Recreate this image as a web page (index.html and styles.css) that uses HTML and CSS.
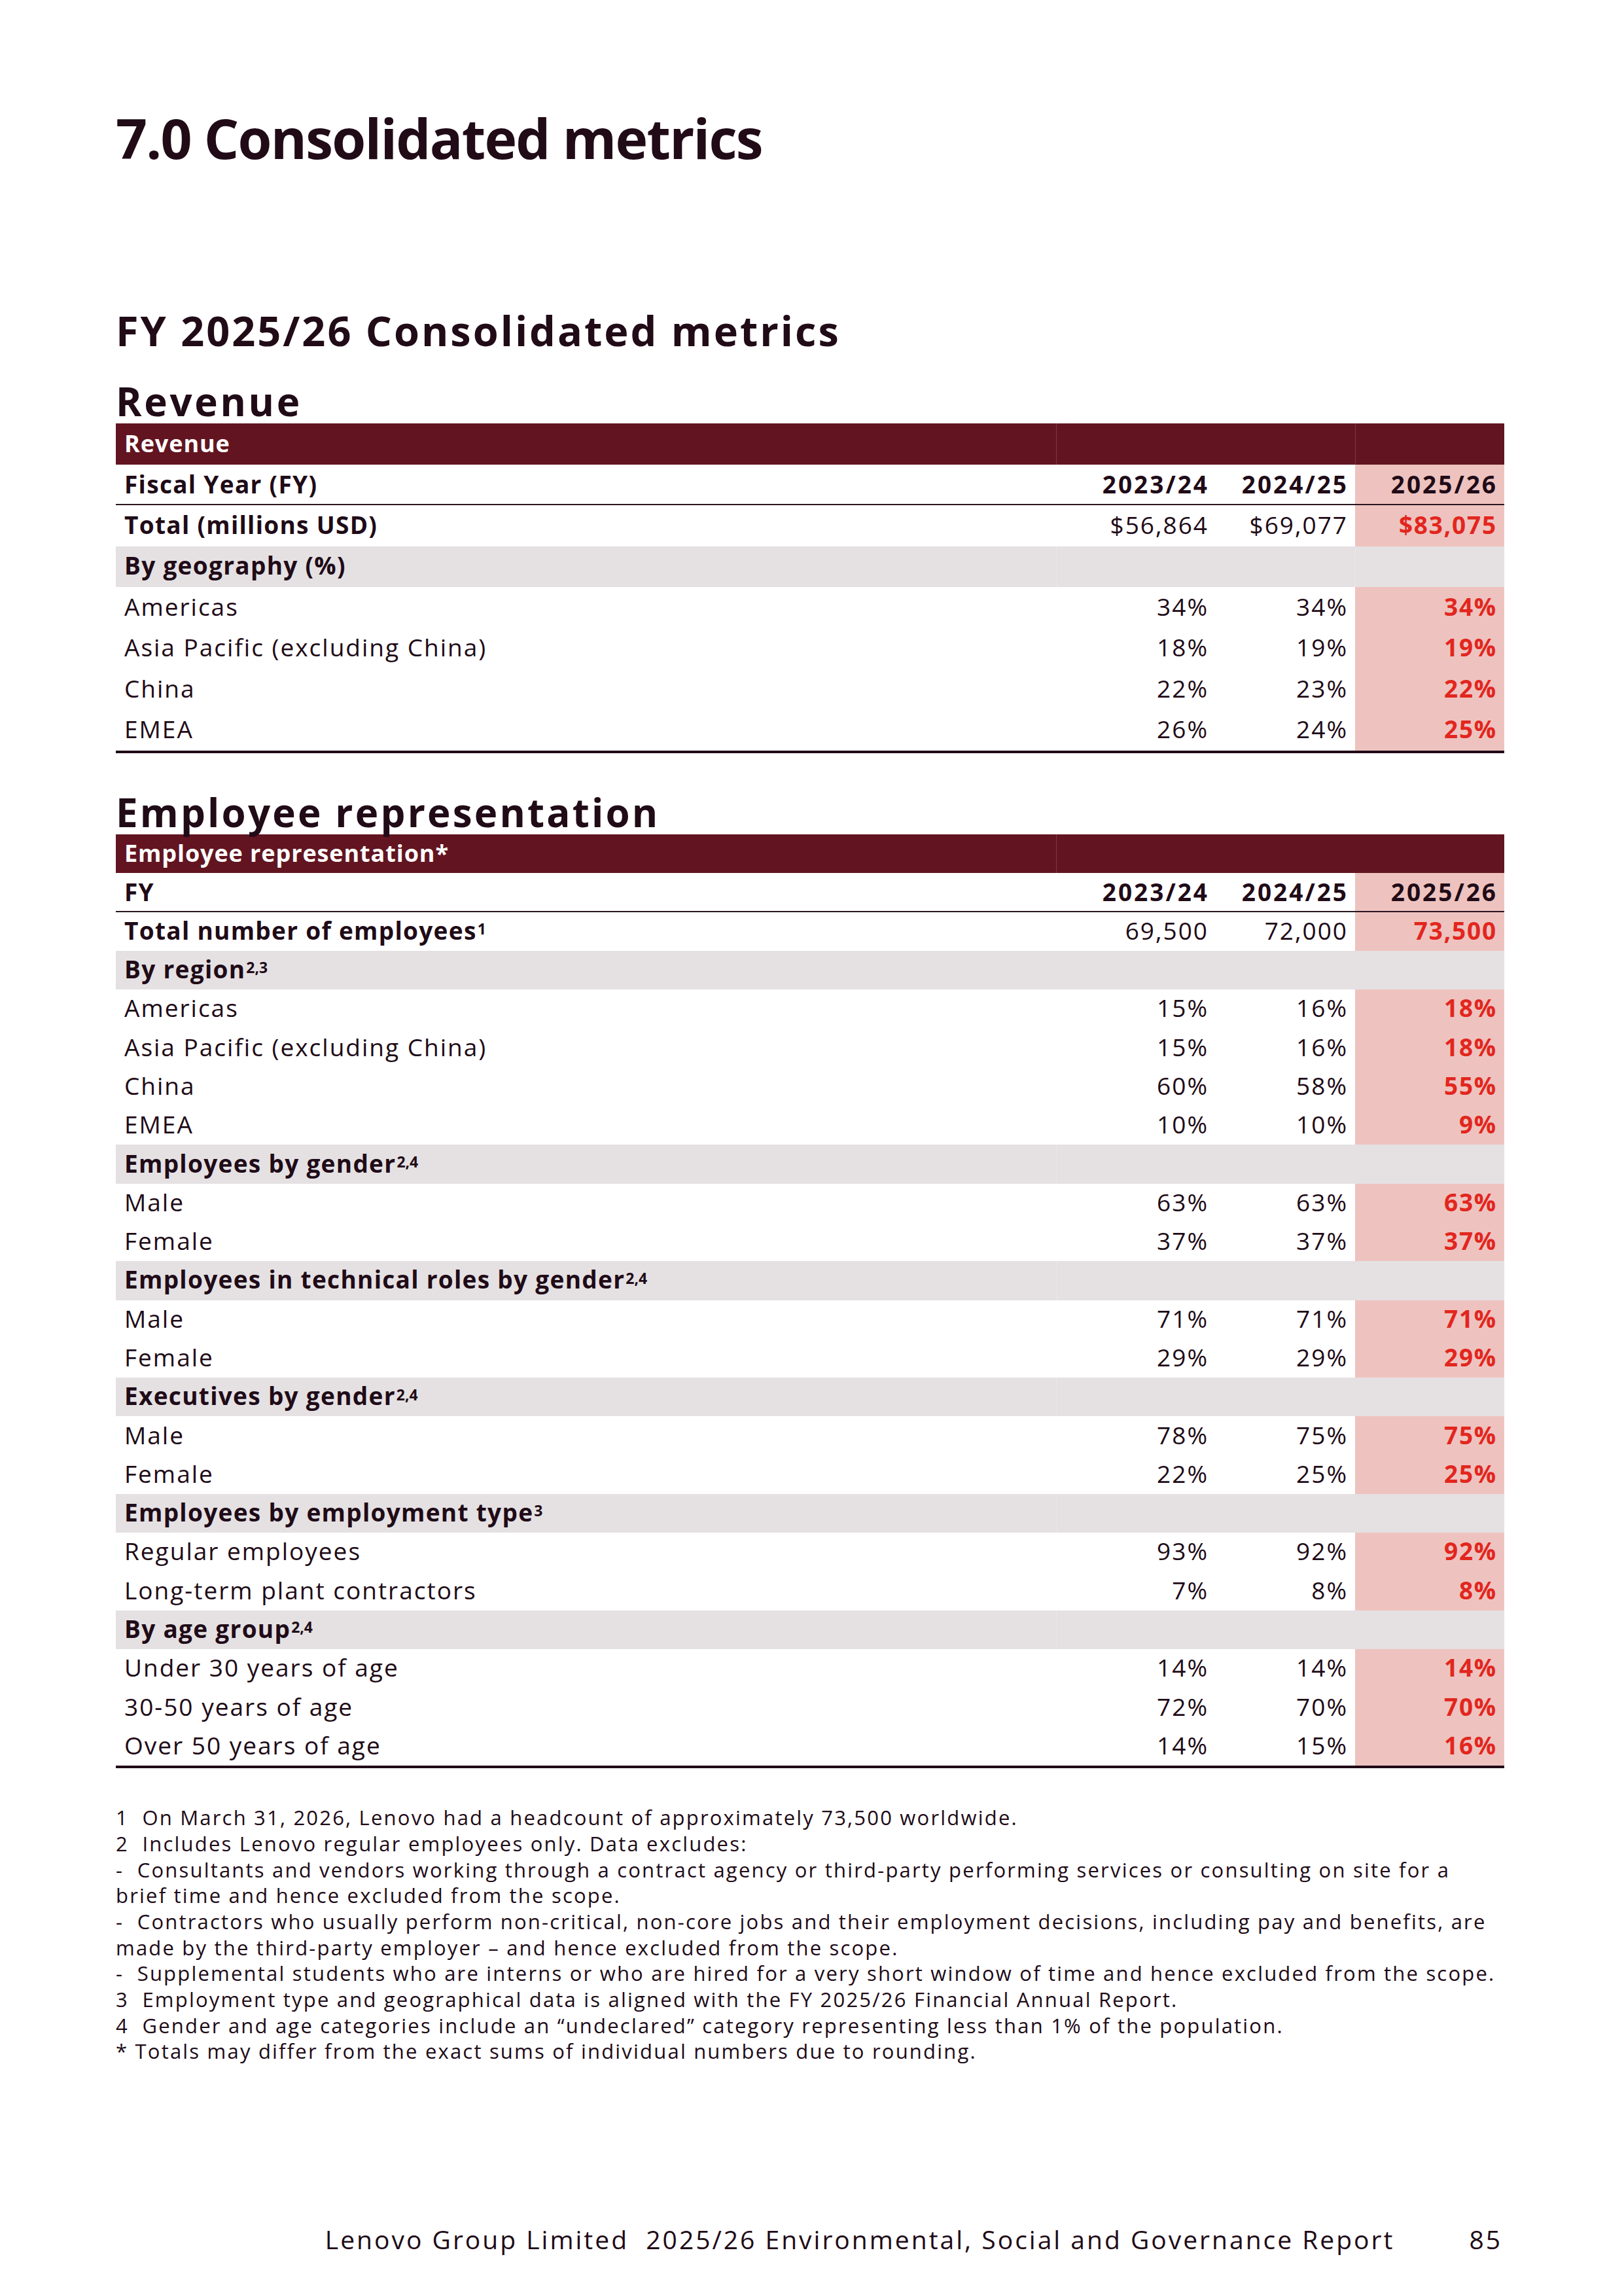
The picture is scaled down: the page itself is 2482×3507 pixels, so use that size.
FILE: index.html
```html
<!DOCTYPE html>
<html lang="en">
<head>
<meta charset="utf-8">
<title>7.0 Consolidated metrics</title>
<link rel="stylesheet" href="styles.css">
</head>
<body>
<div class="page">
  <h1 class="title">7.0 Consolidated metrics</h1>
  <h2 class="subtitle">FY 2025/26 Consolidated metrics</h2>

  <h3 class="section rev-title">Revenue</h3>
  <div class="tbl rev">
    <div class="row head"><div class="c lbl">Revenue</div><div class="c"></div><div class="c nb"></div><div class="c"></div></div>
    <div class="row fy"><div class="c lbl b">Fiscal Year (FY)</div><div class="c num yr">2023/24</div><div class="c num yr">2024/25</div><div class="c num yr hl">2025/26</div></div>
    <div class="row"><div class="c lbl b">Total (millions USD)</div><div class="c num">$56,864</div><div class="c num">$69,077</div><div class="c num hl red">$83,075</div></div>
    <div class="row grp"><div class="c lbl b">By geography (%)</div><div class="c"></div><div class="c nb"></div><div class="c"></div></div>
    <div class="row"><div class="c lbl">Americas</div><div class="c num">34%</div><div class="c num">34%</div><div class="c num hl red">34%</div></div>
    <div class="row"><div class="c lbl">Asia Pacific (excluding China)</div><div class="c num">18%</div><div class="c num">19%</div><div class="c num hl red">19%</div></div>
    <div class="row"><div class="c lbl">China</div><div class="c num">22%</div><div class="c num">23%</div><div class="c num hl red">22%</div></div>
    <div class="row last"><div class="c lbl">EMEA</div><div class="c num">26%</div><div class="c num">24%</div><div class="c num hl red">25%</div></div>
  </div>

  <h3 class="section emp-title">Employee representation</h3>
  <div class="tbl emp">
    <div class="row head"><div class="c lbl">Employee representation*</div><div class="c"></div><div class="c nb"></div><div class="c nb"></div></div>
    <div class="row fy"><div class="c lbl b">FY</div><div class="c num yr">2023/24</div><div class="c num yr">2024/25</div><div class="c num yr hl">2025/26</div></div>
    <div class="row"><div class="c lbl b">Total number of employees<sup>1</sup></div><div class="c num">69,500</div><div class="c num">72,000</div><div class="c num hl red">73,500</div></div>
    <div class="row grp"><div class="c lbl b">By region<sup>2,3</sup></div><div class="c nb"></div><div class="c nb"></div><div class="c nb"></div></div>
    <div class="row"><div class="c lbl">Americas</div><div class="c num">15%</div><div class="c num">16%</div><div class="c num hl red">18%</div></div>
    <div class="row"><div class="c lbl">Asia Pacific (excluding China)</div><div class="c num">15%</div><div class="c num">16%</div><div class="c num hl red">18%</div></div>
    <div class="row"><div class="c lbl">China</div><div class="c num">60%</div><div class="c num">58%</div><div class="c num hl red">55%</div></div>
    <div class="row"><div class="c lbl">EMEA</div><div class="c num">10%</div><div class="c num">10%</div><div class="c num hl red">9%</div></div>
    <div class="row grp"><div class="c lbl b">Employees by gender<sup>2,4</sup></div><div class="c"></div><div class="c nb"></div><div class="c nb"></div></div>
    <div class="row"><div class="c lbl">Male</div><div class="c num">63%</div><div class="c num">63%</div><div class="c num hl red">63%</div></div>
    <div class="row"><div class="c lbl">Female</div><div class="c num">37%</div><div class="c num">37%</div><div class="c num hl red">37%</div></div>
    <div class="row grp"><div class="c lbl b">Employees in technical roles by gender<sup>2,4</sup></div><div class="c"></div><div class="c nb"></div><div class="c nb"></div></div>
    <div class="row"><div class="c lbl">Male</div><div class="c num">71%</div><div class="c num">71%</div><div class="c num hl red">71%</div></div>
    <div class="row"><div class="c lbl">Female</div><div class="c num">29%</div><div class="c num">29%</div><div class="c num hl red">29%</div></div>
    <div class="row grp"><div class="c lbl b">Executives by gender<sup>2,4</sup></div><div class="c"></div><div class="c nb"></div><div class="c nb"></div></div>
    <div class="row"><div class="c lbl">Male</div><div class="c num">78%</div><div class="c num">75%</div><div class="c num hl red">75%</div></div>
    <div class="row"><div class="c lbl">Female</div><div class="c num">22%</div><div class="c num">25%</div><div class="c num hl red">25%</div></div>
    <div class="row grp"><div class="c lbl b">Employees by employment type<sup>3</sup></div><div class="c"></div><div class="c nb"></div><div class="c nb"></div></div>
    <div class="row"><div class="c lbl">Regular employees</div><div class="c num">93%</div><div class="c num">92%</div><div class="c num hl red">92%</div></div>
    <div class="row"><div class="c lbl">Long-term plant contractors</div><div class="c num">7%</div><div class="c num">8%</div><div class="c num hl red">8%</div></div>
    <div class="row grp"><div class="c lbl b">By age group<sup>2,4</sup></div><div class="c"></div><div class="c nb"></div><div class="c nb"></div></div>
    <div class="row"><div class="c lbl">Under 30 years of age</div><div class="c num">14%</div><div class="c num">14%</div><div class="c num hl red">14%</div></div>
    <div class="row"><div class="c lbl">30-50 years of age</div><div class="c num">72%</div><div class="c num">70%</div><div class="c num hl red">70%</div></div>
    <div class="row last"><div class="c lbl">Over 50 years of age</div><div class="c num">14%</div><div class="c num">15%</div><div class="c num hl red">16%</div></div>
  </div>

  <div class="notes">
    <p>1&nbsp; On March 31, 2026, Lenovo had a headcount of approximately 73,500 worldwide.</p>
    <p>2&nbsp; Includes Lenovo regular employees only. Data excludes:</p>
    <p>-&nbsp; Consultants and vendors working through a contract agency or third-party performing services or consulting on site for a<br>brief time and hence excluded from the scope.</p>
    <p>-&nbsp; Contractors who usually perform non-critical, non-core jobs and their employment decisions, including pay and benefits, are<br>made by the third-party employer – and hence excluded from the scope.</p>
    <p>-&nbsp; Supplemental students who are interns or who are hired for a very short window of time and hence excluded from the scope.</p>
    <p>3&nbsp; Employment type and geographical data is aligned with the FY 2025/26 Financial Annual Report.</p>
    <p>4&nbsp; Gender and age categories include an “undeclared” category representing less than 1% of the population.</p>
    <p>* Totals may differ from the exact sums of individual numbers due to rounding.</p>
  </div>

  <footer class="footer">
    <span class="report">Lenovo Group Limited&nbsp; 2025/26 Environmental, Social and Governance Report</span>
    <span class="pageno">85</span>
  </footer>
</div>
</body>
</html>
```
FILE: styles.css
```css
html, body {
  margin: 0;
  padding: 0;
  background: #ffffff;
}
body {
  font-family: "Open Sans", "Noto Sans", sans-serif;
  color: #200b17;
  width: 2482px;
  height: 3507px;
  overflow: hidden;
}
.page {
  width: 2122px;
  padding: 0 183px 0 177px;
}
.title {
  font-size: 84px;
  line-height: 84px;
  font-weight: 700;
  margin: 0;
  padding-top: 169px;
  letter-spacing: -1.75px;
}
.subtitle {
  font-size: 63px;
  line-height: 63px;
  font-weight: 700;
  margin: 0;
  padding-top: 220px;
  letter-spacing: 3px;
}
.section {
  font-size: 60px;
  line-height: 60px;
  font-weight: 700;
  margin: 0;
  letter-spacing: 3.2px;
}
.rev-title { padding-top: 47px; letter-spacing: 3.7px; }
.emp-title { padding-top: 60px; }
.tbl {
  font-size: 37px;
  letter-spacing: 2px;
}
.rev { margin-top: 4px; }
.emp { margin-top: 4px; }
.row {
  display: grid;
  grid-template-columns: 1437px 244px 213px 228px;
}
.rev .row { height: 62.5px; }
.emp .row { height: 59.3px; }
.c {
  display: flex;
  align-items: center;
  padding: 0 13px 4px;
  white-space: nowrap;
}
.num { justify-content: flex-end; padding-right: 11px; }
.b { font-weight: 700; letter-spacing: 1.3px; }
.yr { font-weight: 700; letter-spacing: 3px; padding-right: 10px; }
.hl { background: #eec3bf; }
.red { color: #e2261e; font-weight: 700; letter-spacing: 1.8px; }
.head { background: #621520; color: #ffffff; }
.head .c { font-weight: 700; font-size: 36px; padding-bottom: 2px; letter-spacing: 0.9px; }
.head .c + .c { border-left: 1px solid #7a3a43; }
.head .c.nb { border-left: none; }
.grp { background: #e5e1e3; }
.grp .c + .c { border-left: 1px solid #ebe8ea; }
.grp .c.nb { border-left: none; }
.fy { border-bottom: 2px solid #2a1620; box-sizing: border-box; }
.fy .c { padding-bottom: 0; }
.last { border-bottom: 4px solid #200b17; box-sizing: content-box; }
sup {
  font-size: 0.62em;
  line-height: 0;
  position: relative;
  top: -0.1em;
  vertical-align: super;
  margin-left: 1px;
  letter-spacing: 0;
}
.notes {
  margin-top: 56px;
  font-size: 31px;
  line-height: 39.7px;
  letter-spacing: 2.2px;
  white-space: nowrap;
}
.notes p { margin: 0; }
.footer {
  display: flex;
  justify-content: flex-end;
  align-items: baseline;
  gap: 114px;
  margin-top: 240px;
  font-size: 39px;
  letter-spacing: 3px;
  padding-right: 3px;
}
```
